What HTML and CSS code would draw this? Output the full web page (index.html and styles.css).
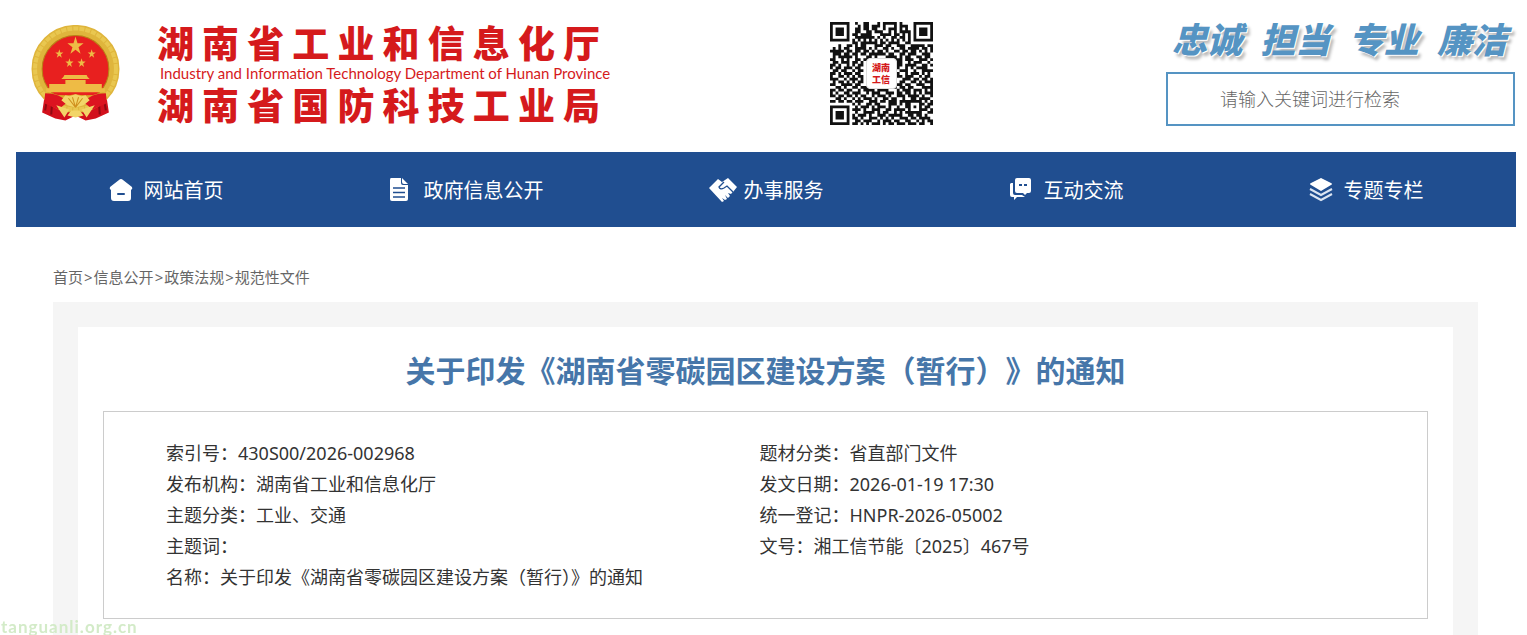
FILE: index.html
```html
<!DOCTYPE html>
<html lang="zh-CN">
<head>
    <meta charset="UTF-8">
    <meta name="viewport" content="width=device-width, initial-scale=1.0">
    <title>关于印发《湖南省零碳园区建设方案（暂行）》的通知</title>
    <link rel="stylesheet" href="styles.css">
</head>
<body>

    <header class="header">
        <a class="brand" href="#">
            <svg class="emblem" viewBox="0 0 88 96" aria-hidden="true">
                <path d="M14 66 L11 86 L24 92 L34 94 L44 89 L54 94 L64 92 L77 86 L74 66 Z" fill="#d2101c"/>
                <path d="M16 72 L14 84 M21 74 L20 88 M67 74 L68 88 M72 72 L74 84" stroke="#8f0a12" stroke-width="2"/>
                <circle cx="44" cy="43" r="38" fill="#e71f19" stroke="#dfb53c" stroke-width="11"/>
                <circle cx="44" cy="43" r="40" fill="none" stroke="#e9c750" stroke-width="4" stroke-dasharray="5 1"/>
                <circle cx="44" cy="43" r="33" fill="#e8201f" stroke="#b98216" stroke-width="1"/>
                <g fill="#eebb45">
                    <path id="star" d="M44 11 L46 17.500 L52 17.500 L47 21.500 L49 28 L44 24 L39 28 L41 21.500 L36 17.500 L42 17.500 Z"/>
                    <use href="#star" transform="translate(6 18) scale(.5)"/>
                    <use href="#star" transform="translate(38 18) scale(.5)"/>
                    <use href="#star" transform="translate(16 27) scale(.5)"/>
                    <use href="#star" transform="translate(28 27) scale(.5)"/>
                    <path d="M33 49 H55 L56 51 L58 53 H30 L32 51 Z M34 54 H54 V58 H70 V62 H73 V66 H15 V62 H18 V58 H34 Z"/>
                </g>
                <path d="M16 66 Q31 71 44 68 Q57 71 72 66 L66 75 Q54 70 44 72 Q34 70 22 75 Z" fill="#d9a92b"/>
                <path d="M14 67 Q29 67 36 76 L27 83 L13 77 Z M74 67 Q59 67 52 76 L61 83 L75 77 Z" fill="#dc1420"/>
                <path d="M44 68 L50 70 L54 69 L58 74 L52 79 L44 81 L36 79 L30 74 L34 69 L38 70 Z M25 79 L38 83 L33 91 Z M63 79 L50 83 L55 91 Z M40 84 H48 L52 89 L44 91 L36 89 Z" fill="#f2d568"/>
                <path d="M44 81 L37 72 M44 81 L41 71 M44 81 L47 71 M44 81 L51 72" stroke="#cf8f1c"/>
            </svg>
            <span class="brand-text">
                <span class="brand-cn">湖南省工业和信息化厅</span>
                <span class="brand-en">Industry and Information Technology Department of Hunan Province</span>
                <span class="brand-cn">湖南省国防科技工业局</span>
            </span>
        </a>

        <div class="qr">
            <svg class="qr-code" viewBox="0 0 37 37" role="img" aria-label="微信二维码">
                <path id="qrPath" fill="#111"/>
            </svg>
            <span class="qr-logo"><span>湖南</span><span>工信</span></span>
        </div>

        <div class="header-side">
            <div class="slogan"><span>忠诚</span><span>担当</span><span>专业</span><span>廉洁</span></div>
            <form class="search">
                <input type="text" class="search-input" aria-label="检索" placeholder="请输入关键词进行检索">
            </form>
        </div>
    </header>

    <nav class="nav">
        <a href="#">
            <svg class="nav-icon" viewBox="0 0 24 24"><path d="M12 1 Q13 1 14 2 L23 9 Q24 11 22 12 V20 Q22 23 19 23 H5 Q2 23 2 20 V12 Q0 11 1 9 L10 2 Q11 1 12 1 Z" fill="#fff"/><path d="M9 16 H15" stroke="#204e90" stroke-width="2" stroke-linecap="round"/></svg>
            网站首页
        </a>
        <a href="#">
            <svg class="nav-icon nav-icon-doc" viewBox="0 0 24 24"><path d="M2 0 H12 V5 Q12 7 14 7 H19 V21 Q19 23 17 23 H3 Q1 23 1 21 V2 Q1 0 2 0 Z M13 0 L19 6 H15 Q13 6 13 4 Z" fill="#fff"/><path d="M4 10 H16 M4 14.500 H16 M4 19 H16" stroke="#204e90" stroke-width="1.500"/></svg>
            政府信息公开
        </a>
        <a href="#">
            <svg class="nav-icon nav-icon-hands" viewBox="0 0 28 24"><path d="M0 10 L9 1 L13 4 L19 0 L28 9 L24 14 L18 8 L13 11 Q10 11 11 8 L14 5 L19 1 L28 9 L22 16 L19 15 L21 18 L19 20 L16 17 L18 21 L16 22 L13 20 L15 23 L13 24 Z" fill="#fff"/><path d="M15 4 L10 9 Q11 12 15 10 L18 8 L24 14" fill="none" stroke="#204e90" stroke-width="1.300"/></svg>
            办事服务
        </a>
        <a href="#">
            <svg class="nav-icon nav-icon-chat" viewBox="0 0 24 24"><path d="M8 0 H20 Q22 0 22 2 V13 Q22 15 20 15 H18 L16 17 L14 15 H8 Q6 15 6 13 V2 Q6 0 8 0 Z M2 5 H4 V15 Q4 17 6 17 H13 L16 19 H8 L5 22 V19 H3 Q1 19 1 17 V6 Z" fill="#fff"/><path d="M10 7 H13 M15 7 H18" stroke="#204e90" stroke-width="2"/></svg>
            互动交流
        </a>
        <a href="#">
            <svg class="nav-icon" viewBox="0 0 24 24"><path d="M12 0 L22 5 Q24 6 22 7 L12 13 L2 7 Q0 6 2 5 Z" fill="#fff"/><path d="M1 11 L12 17 L23 11 M1 16 L12 22 L23 16" fill="none" stroke="#dce5f2" stroke-width="2"/></svg>
            专题专栏
        </a>
    </nav>

    <main class="main">
        <div class="crumbs"><a href="#">首页</a>&gt;<a href="#">信息公开</a>&gt;<a href="#">政策法规</a>&gt;<a href="#">规范性文件</a></div>

        <div class="panel">
            <article class="article">
                <h1>关于印发《湖南省零碳园区建设方案（暂行）》的通知</h1>
                <ul class="info">
                    <li>索引号：430S00/2026-002968</li>
                    <li>题材分类：省直部门文件</li>
                    <li>发布机构：湖南省工业和信息化厅</li>
                    <li>发文日期：2026-01-19 17:30</li>
                    <li>主题分类：工业、交通</li>
                    <li>统一登记：HNPR-2026-05002</li>
                    <li>主题词：</li>
                    <li>文号：湘工信节能〔2025〕467号</li>
                    <li class="info-wide">名称：关于印发《湖南省零碳园区建设方案（暂行）》的通知</li>
                </ul>
            </article>
        </div>
    </main>

    <div class="watermark">tanguanli.org.cn</div>

    <script>
        const rows = [
            '1111111001001100010111110100001111111',
            '1000001000101101110100010111001000001',
            '1011101001101101100101110101001011101',
            '1011101001100110111001010111101011101',
            '1011101011011110001111011010101011101',
            '1000001001111111010100110110101000001',
            '1111111010101010101010101010101111111',
            '0000000011011111101101111001100000000',
            '0001001101011000111011001110011111011',
            '0101011001111010100110100110111101101',
            '1111101101101101011010011011011010101',
            '0111011011011011111101100110111001110',
            '0101111101000110100011110101100110110',
            '1100101001101100000001011101110011101',
            '0110111011010000000000101100101110010',
            '1101001010110000000000101101111001101',
            '1011011101100000000000011001010111100',
            '0110110010110000000000110111001001111',
            '1101011101100000000000101001011101010',
            '1001101010110000000000011101110010110',
            '1110010111010000000000110011101101101',
            '0101101010110000000000100110011010111',
            '1100111101100000000000011101100111001',
            '0011010011011100101001110110110001111',
            '1101101100101111011110001011101110101',
            '1010011011100101110011101101101010111',
            '1101101101011001011101001110111101001',
            '0011010010101110100110110010011011110',
            '1101101101110011101101110111111110101',
            '0000000010100110110001110101100011011',
            '1111111001011101011101001001101010110',
            '1000001011101001110011011110100011101',
            '1011101001001111010110010101111110011',
            '1011101010111010011101111100110110100',
            '1011101011010011101010100111011011110',
            '1000001001101110010111011001100101011',
            '1111111011010101110101101110111011001'
        ];
        // merge neighbouring modules into one bar
        let d = '';
        rows.forEach((row, y) => {
            for (const run of row.matchAll(/1+/g)) {
                const w = run[0].length;
                d += `M${run.index} ${y}h${w}v1h-${w}z`;
            }
        });
        document.getElementById('qrPath').setAttribute('d', d);
    </script>

</body>
</html>
```
FILE: styles.css
```css
* {
    box-sizing: border-box;
}
body {
    margin: 0;
    padding: 0 11px 0 16px;
    background-color: #fff;
    color: #333;
    font-family: "Noto Sans", "Noto Sans CJK SC", sans-serif;
    font-size: 18px;
}
a {
    color: inherit;
    text-decoration: none;
}
.header {
    display: flex;
    justify-content: space-between;
    align-items: flex-start;
    height: 152px;
    padding: 20px 0 0 15px;
}
.brand {
    display: flex;
    gap: 37px;
    color: #d51a1c;
}
.emblem {
    width: 89px;
    height: 98px;
    margin-top: 5px;
}
.brand-text {
    width: 443px;
}
.brand-cn {
    display: block;
    font-family: "Noto Sans CJK SC", sans-serif;
    font-size: 37px;
    font-weight: 900;
    line-height: 44px;
    text-align: justify;
    text-align-last: justify;
}
.brand-en {
    display: block;
    padding-left: 3px;
    font-family: Lato, sans-serif;
    font-size: 15px;
    line-height: 18px;
    white-space: nowrap;
}
.qr {
    position: relative;
    width: 103px;
    height: 103px;
    margin: 2px 4px 0 0;
}
.qr-code {
    display: block;
    width: 100%;
    height: 100%;
}
.qr-logo {
    position: absolute;
    top: 36px;
    left: 36px;
    display: flex;
    flex-direction: column;
    justify-content: center;
    width: 31px;
    height: 31px;
    border: 1px solid #ddd;
    border-radius: 4px;
    background-color: #fff;
    color: #d51a1c;
    font-family: "Noto Sans CJK SC", sans-serif;
    font-size: 9px;
    font-weight: 900;
    line-height: 12px;
    text-align: center;
}
.header-side {
    width: 349px;
    margin: 2px 1px 0 0;
}
.slogan {
    display: flex;
    justify-content: space-between;
    height: 50px;
    padding: 0 8px 0 6px;
    color: #5594c3;
    font-family: "Noto Sans CJK SC", sans-serif;
    font-size: 35px;
    font-style: italic;
    font-weight: 900;
    line-height: 32px;
    text-shadow: 1px 1px 0 #fff, 3px 4px 3px #bbb;
}
.search-input {
    display: block;
    width: 100%;
    height: 54px;
    padding: 0 52px 2px;
    border: 2px solid #5594c3;
    background-color: #fff;
    font-family: "Noto Sans CJK SC", sans-serif;
    font-size: 18px;
    font-weight: 300;
}
.search-input::placeholder {
    color: #666;
}
.nav {
    display: flex;
    height: 75px;
    background-color: #204e90;
}
.nav a {
    flex: 1;
    display: flex;
    justify-content: center;
    align-items: center;
    gap: 11px;
    color: #fff;
    font-size: 20px;
}
.nav-icon {
    width: 24px;
    height: 24px;
}
.nav-icon-hands {
    width: 28px;
    margin-right: -4px;
}
.main {
    padding: 38px 38px 0 37px;
}
.crumbs {
    display: flex;
    gap: 1px;
    height: 37px;
    color: #666;
    font-size: 15px;
    line-height: 24px;
}
.panel {
    padding: 25px 25px 0;
    background-color: #f5f5f5;
}
.article {
    padding: 20px 25px 40px;
    background-color: #fff;
}
h1 {
    margin: 0 0 16px;
    color: #4676a9;
    font-size: 30px;
    line-height: 48px;
    text-align: center;
    text-spacing-trim: space-all;
}
.info {
    display: grid;
    grid-template-columns: 1fr 1fr;
    margin: 0;
    padding: 26px 74px 25px 62px;
    border: 1px solid #ccc;
    line-height: 31px;
    list-style: none;
}
.info-wide {
    grid-column: span 2;
}
.watermark {
    position: fixed;
    bottom: 0;
    left: 1px;
    color: #d3ebc8;
    font-family: Lato, sans-serif;
    font-size: 17px;
    font-weight: 700;
    letter-spacing: 1px;
    line-height: 17px;
}
```
